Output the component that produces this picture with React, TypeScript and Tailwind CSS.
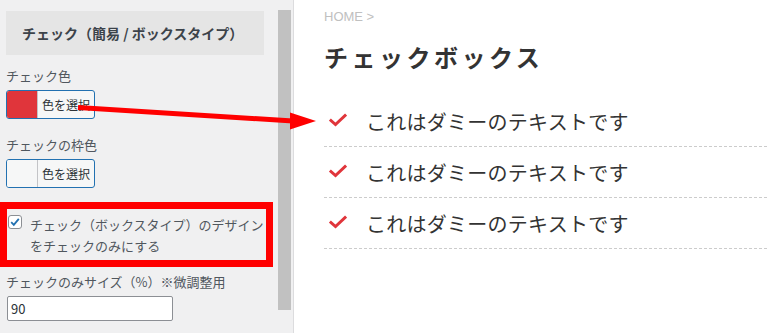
import React from 'react';

const jp = { fontFamily: '"Noto Sans CJK JP", "Noto Sans", sans-serif' };

const ColorButton = ({ swatch }: { swatch: string }) => (
    <button className="flex h-[29px] w-[89px] overflow-hidden rounded-[3px] border border-[#2271b1] bg-[#f6f7f7] text-[12px] text-[#2c3338]">
        <span className={`h-full w-[31px] border-r border-[#c3c4c7] ${swatch}`}></span>
        <span className="flex flex-1 items-center justify-center">色を選択</span>
    </button>
);

const CheckIcon = () => (
    <svg width="18" height="14" viewBox="0 0 18 14" className="shrink-0">
        <path d="M2 7.5 L6.5 11.5 L16 2.5" fill="none" stroke="#e0353b" strokeWidth="3" strokeLinecap="square" />
    </svg>
);

const App: React.FC = () => {
    const items = ['これはダミーのテキストです', 'これはダミーのテキストです', 'これはダミーのテキストです'];

    return (
        <div className="relative flex h-[333px] w-[767px] overflow-hidden bg-white" style={jp}>
            {/* customizer panel */}
            <div className="flex h-full w-[294px] shrink-0 border-r border-[#dcdcde] bg-[#f0f0f1]">
                <div className="flex w-[273px] flex-col pt-[11px] text-[13px] text-[#50575e]">
                    <div className="ml-[6px] flex h-[44px] w-[258px] items-center bg-[#e5e5e5] pl-[16px] text-[14px] font-bold text-[#3c434a]">
                        チェック（簡易 / ボックスタイプ）
                    </div>
                    <div className="ml-[6px] mt-[11px] leading-[20px]">チェック色</div>
                    <div className="ml-[6px] mt-[4px]"><ColorButton swatch="bg-[#e0353b]" /></div>
                    <div className="ml-[6px] mt-[16px] leading-[20px]">チェックの枠色</div>
                    <div className="ml-[6px] mt-[4px]"><ColorButton swatch="bg-[#f6f7f7]" /></div>
                    <div className="mt-[14px] flex h-[65px] w-[273px] items-start border-[7px] border-[#ff0000] pl-[1px] pt-[5px]">
                        <span className="mt-[1px] flex h-[14px] w-[14px] shrink-0 items-center justify-center rounded-[3px] border border-[#8c8f94] bg-white">
                            <svg width="12" height="12" viewBox="0 0 12 12">
                                <path d="M2.2 6.2 L4.8 8.8 L9.8 2.8" fill="none" stroke="#2271b1" strokeWidth="1.8" />
                            </svg>
                        </span>
                        <span className="ml-[8px] leading-[21px]">チェック（ボックスタイプ）のデザインをチェックのみにする</span>
                    </div>
                    <div className="ml-[6px] mt-[5px] leading-[20px]">チェックのみサイズ（%）※微調整用</div>
                    <div className="ml-[7px] mt-[4px] flex h-[25px] w-[166px] items-center rounded-[2px] border border-[#8c8f94] bg-white pl-[3px] text-[13px] text-[#2c3338]">
                        90
                    </div>
                </div>
                <div className="ml-[5px] mt-[10px] h-[300px] w-[13px] bg-[#c1c1c1]"></div>
            </div>

            {/* preview */}
            <div className="flex flex-1 flex-col pl-[30px] pt-[9px] text-[#333]">
                <div className="text-[13px] leading-[16px] text-[#c0c0c0]" style={{ fontFamily: '"Liberation Sans", Arial, sans-serif' }}>
                    HOME &gt;
                </div>
                <h1 className="mt-[17px] text-[24px] font-bold leading-[30px] tracking-[3.5px] text-[#333]">チェックボックス</h1>
                <ul className="mt-[24px]">
                    {items.map((t, i) => (
                        <li key={i} className="flex h-[51px] items-center border-b border-dashed border-[#cccccc] pl-[5px] pt-[1px]">
                            <span className="-mt-[3px]"><CheckIcon /></span>
                            <span className="ml-[19px] text-[20px] leading-[26px] tracking-[0.25px]">{t}</span>
                        </li>
                    ))}
                </ul>
            </div>

            {/* annotation arrow */}
            <svg className="pointer-events-none absolute left-0 top-0" width="767" height="333">
                <line x1="78" y1="107.5" x2="293" y2="121" stroke="#ff0000" strokeWidth="5" />
                <polygon points="290,112.5 316,121 290,129.5" fill="#ff0000" />
            </svg>
        </div>
    );
};

export default App;
